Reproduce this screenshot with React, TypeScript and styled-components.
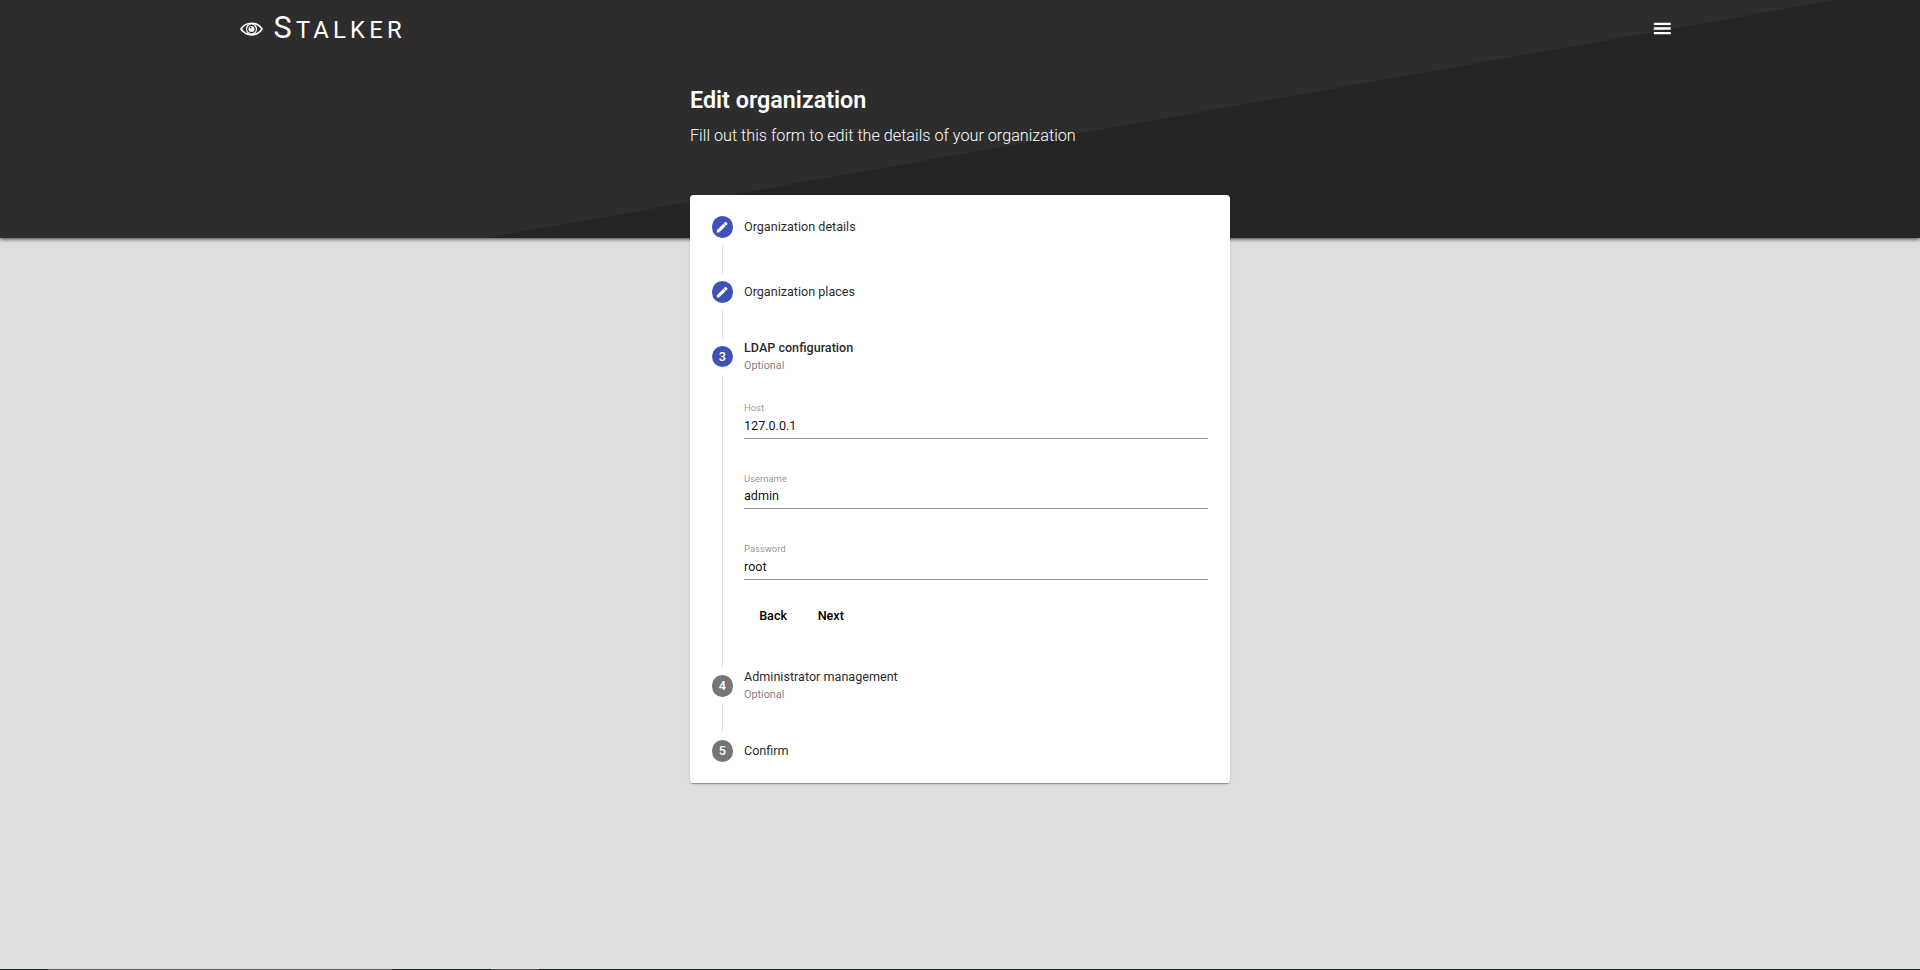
import React from "react";
import styled, { createGlobalStyle } from "styled-components";

const GlobalStyle = createGlobalStyle`
  * { box-sizing: border-box; }
  html, body { margin: 0; padding: 0; }
  body {
    background: #dfdfdf;
    font-family: Roboto, "Liberation Sans", sans-serif;
    color: rgba(0, 0, 0, 0.87);
    overflow: hidden;
  }
`;

const Page = styled.div`
  height: 970px;
  display: flex;
  flex-direction: column;
`;

const Header = styled.header`
  height: 238px;
  flex: none;
  color: #fff;
  background: linear-gradient(170deg, #2d2d2d 56.1%, #242424 56.15%);
  box-shadow: 0 1px 4px rgba(0, 0, 0, 0.75);
`;

const Toolbar = styled.div`
  height: 58px;
  padding: 0 246px 0 240px;
  display: flex;
  align-items: center;
  justify-content: space-between;
`;

const Brand = styled.a`
  display: flex;
  align-items: center;
  gap: 10.5px;
`;

const BrandIcon = styled.svg`
  width: 23px;
  height: 14px;
  display: block;
`;

const BrandName = styled.span`
  font-size: 23.8px;
  line-height: 30px;
  letter-spacing: 4.2px;
  text-transform: uppercase;
  &::first-letter { font-size: 30.6px; }
  display: block;
`;

const MenuButton = styled.button`
  border: 0;
  padding: 0 0 1px;
  background: none;
  color: inherit;
  svg { display: block; }
`;

const Intro = styled.div`
  width: 540px;
  margin: 26px auto 0;
`;

const Title = styled.h1`
  margin: 0;
  padding-top: 1px;
  font-size: 23.3px;
  line-height: 30px;
  font-weight: 600;
`;

const Subtitle = styled.p`
  margin: 7px 0 0;
  font-size: 16.2px;
  line-height: 27px;
  font-weight: 300;
`;

const Card = styled.main`
  width: 540px;
  height: 588.6px;
  margin: -43.4px auto 0;
  flex: none;
  position: relative;
  background: #fff;
  border-radius: 3.6px;
  box-shadow: 0 2px 1px -1px rgba(0, 0, 0, 0.2), 0 1px 1px rgba(0, 0, 0, 0.14),
    0 1px 3px rgba(0, 0, 0, 0.12);
`;

const StepHeader = styled.div`
  height: 64.8px;
  padding: 0 21.6px;
  display: grid;
  grid-template-columns: 21.6px 1fr;
  column-gap: 10.8px;
  align-items: center;
`;

const Rail = styled.div`
  height: 64.8px;
  display: flex;
  flex-direction: column;
  align-items: center;
  justify-content: space-between;
`;

const RailLine = styled.span<{ $hidden?: boolean }>`
  width: 1px;
  height: 14.4px;
  background: ${(p) => (p.$hidden ? "transparent" : "#e0e0e0")};
`;

const Badge = styled.span<{ $active?: boolean }>`
  width: 21.6px;
  height: 21.6px;
  border-radius: 50%;
  display: flex;
  align-items: center;
  justify-content: center;
  background: ${(p) => (p.$active ? "#3f51b5" : "#757575")};
  color: #fff;
  font-size: 12.6px;
  font-weight: 500;
  line-height: 14px;
`;

const StepLabel = styled.div<{ $active?: boolean }>`
  font-size: 12.6px;
  line-height: 18px;
  font-weight: ${(p) => (p.$active ? 500 : 400)};
  color: rgba(0, 0, 0, 0.87);
`;

const Optional = styled.div`
  font-size: 10.8px;
  line-height: 17px;
  color: rgba(0, 0, 0, 0.54);
`;

const StepBody = styled.div`
  height: 264.6px;
  margin-left: 32.4px;
  padding: 0 21.6px 0 20.6px;
  border-left: 1px solid #e0e0e0;
`;

const Field = styled.label`
  display: flex;
  flex-direction: column;
  height: 70.3px;
  padding-top: 13.3px;
`;

const FieldName = styled.span`
  font-size: 9.45px;
  line-height: 12px;
  color: rgba(0, 0, 0, 0.46);
`;

const Input = styled.input`
  height: 24.7px;
  padding: 0 0 1px;
  border: 0;
  border-bottom: 1px solid #949494;
  outline: 0;
  background: none;
  font: 400 12.6px Roboto, sans-serif;
  color: rgba(0, 0, 0, 0.95);
`;

const Actions = styled.div`
  display: flex;
  gap: 1.8px;
  padding-left: 0.8px;
`;

const TextButton = styled.button`
  height: 31.4px;
  padding: 0 14.4px;
  border: 0;
  background: none;
  font: 500 12.6px Roboto, sans-serif;
  color: #000;
`;

const EdgeStrip = styled.footer`
  margin-top: auto;
  height: 1px;
  flex: none;
  background: linear-gradient(
    90deg,
    #1d2826 48px, #5c5a58 48px 392px, #1d2826 392px 491px, #55585a 491px 539px, #1d2826 539px
  );
`;

const Pencil = () => (
  <svg width="14.4" height="14.4" viewBox="0 0 24 24" fill="#fff">
    <path d="M3 17.25V21h3.75L17.81 9.94l-3.75-3.75L3 17.25zM20.71 7.04a.996.996 0 0 0 0-1.41l-2.34-2.34a.996.996 0 0 0-1.41 0l-2.400 2.400 3.75 3.75 2.400-2.400z" />
  </svg>
);

type StepProps = {
  mark: React.ReactNode;
  label: string;
  optional?: boolean;
  reached?: boolean;
  active?: boolean;
  first?: boolean;
  last?: boolean;
};

const Step = ({ mark, label, optional, reached, active, first, last }: StepProps) => (
  <StepHeader>
    <Rail>
      <RailLine $hidden={first} />
      <Badge $active={reached}>{mark}</Badge>
      <RailLine $hidden={last} />
    </Rail>
    <div>
      <StepLabel $active={active}>{label}</StepLabel>
      {optional && <Optional>Optional</Optional>}
    </div>
  </StepHeader>
);

const fields = [
  { name: "Host", value: "127.0.0.1" },
  { name: "Username", value: "admin" },
  { name: "Password", value: "root" },
];

export default function App() {
  return (
    <Page>
      <GlobalStyle />
      <Header>
        <Toolbar>
          <Brand>
            <BrandIcon viewBox="0 0 23 14" fill="none" stroke="#fff">
              <path d="M1 7C6-.7 17-.7 22 7 17 14.700 6 14.700 1 7z" strokeWidth="1.700" />
              <circle cx="11.500" cy="7" r="5" strokeWidth="1.200" />
              <circle cx="11.500" cy="7" r="3" fill="#fff" stroke="none" />
              <circle cx="10.600" cy="5.600" r="0.900" fill="#2d2d2d" stroke="none" />
            </BrandIcon>
            <BrandName>Stalker</BrandName>
          </Brand>
          <MenuButton aria-label="Menu">
            <svg width="22.6" height="23" viewBox="0 0 24 24" fill="#fff">
              <path d="M3 18.200h18v-2.500H3v2.500zm0-5h18v-2.400H3v2.400zm0-7.400v2.500h18V5.800H3z" />
            </svg>
          </MenuButton>
        </Toolbar>
        <Intro>
          <Title>Edit organization</Title>
          <Subtitle>Fill out this form to edit the details of your organization</Subtitle>
        </Intro>
      </Header>
      <Card>
        <Step mark={<Pencil />} label="Organization details" reached first />
        <Step mark={<Pencil />} label="Organization places" reached />
        <Step mark="3" label="LDAP configuration" optional reached active />
        <StepBody>
          {fields.map((f) => (
            <Field key={f.name}>
              <FieldName>{f.name}</FieldName>
              <Input defaultValue={f.value} />
            </Field>
          ))}
          <Actions>
            <TextButton>Back</TextButton>
            <TextButton>Next</TextButton>
          </Actions>
        </StepBody>
        <Step mark="4" label="Administrator management" optional />
        <Step mark="5" label="Confirm" last />
      </Card>
      <EdgeStrip />
    </Page>
  );
}
